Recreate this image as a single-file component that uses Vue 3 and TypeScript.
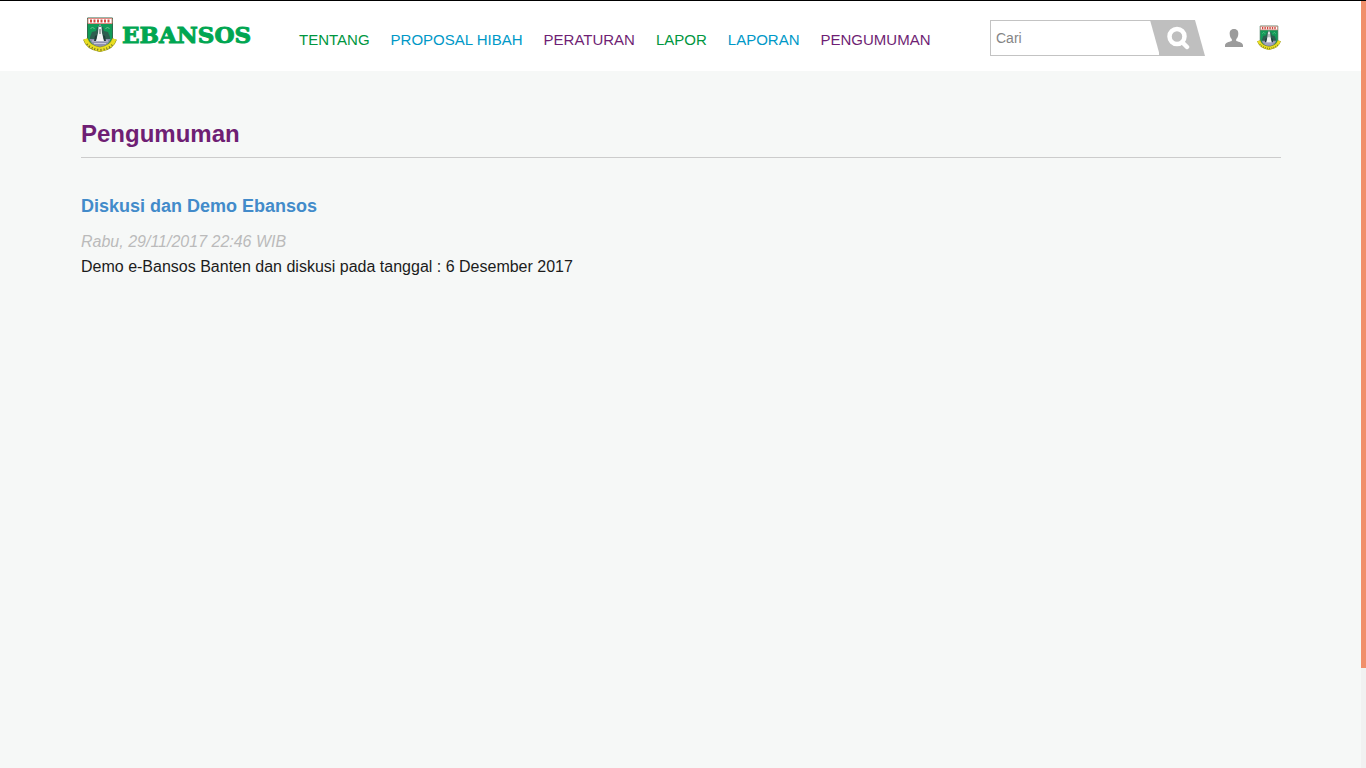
<script setup lang="ts">
import { ref } from 'vue'

interface MenuItem {
  label: string
  tone: 'green' | 'blue' | 'purple'
}

const menu: MenuItem[] = [
  { label: 'TENTANG', tone: 'green' },
  { label: 'PROPOSAL HIBAH', tone: 'blue' },
  { label: 'PERATURAN', tone: 'purple' },
  { label: 'LAPOR', tone: 'green' },
  { label: 'LAPORAN', tone: 'blue' },
  { label: 'PENGUMUMAN', tone: 'purple' },
]

const announcements = [
  {
    title: 'Diskusi dan Demo Ebansos',
    date: 'Rabu, 29/11/2017 22:46 WIB',
    body: 'Demo e-Bansos Banten dan diskusi pada tanggal : 6 Desember 2017',
  },
]

const query = ref('')
</script>

<template>
  <svg class="defs" aria-hidden="true">
    <symbol id="crest" viewBox="0 0 34 36">
      <path d="M4.500 1H29.500V21C29.500 27 24 30 17 32C10 30 4.500 27 4.500 21Z" fill="#119b58" stroke="#2f6b4c" stroke-width="1" />
      <path d="M5 1.500H29V6.500H5Z" fill="#fff" stroke="#e08a84" stroke-width="1" />
      <path d="M8 2.500V5.500M11.500 2.500V5.500M15 2.500V5.500M18.500 2.500V5.500M22 2.500V5.500M25.500 2.500V5.500" stroke="#d5483f" stroke-width="2" />
      <path d="M7 20L9 15L13 14L14 10L20 10L21 14L25 15L27 20V23H7Z" fill="#2c5f50" />
      <path d="M6.500 22H27.500C26 27 22 29 17 31C12 29 8 27 6.500 22Z" fill="#8e90ae" />
      <path d="M9 24H25M11 26.500H23" stroke="#c9cbdc" stroke-width="1" />
      <path d="M17 7L18.500 10L19 16L21 24H13L15 16L15.500 10Z" fill="#f3f5f5" />
      <path d="M17 7L18 10H16ZM16.500 12H17.500V17H16.500Z" fill="#4a5b5b" />
      <path d="M12 19L14 18L13 24H11ZM22 19L20 18L21 24H23Z" fill="#203a38" />
      <path d="M7.500 12L9.500 10L11.500 12M22.500 12L24.500 10L26.500 12" fill="none" stroke="#6fc492" stroke-width="1" />
      <path d="M2.500 22Q5 30.500 17 32.500Q29 30.500 31.500 22" fill="none" stroke="#8d8a23" stroke-width="5" />
      <path d="M2.500 22Q5 30.500 17 32.500Q29 30.500 31.500 22" fill="none" stroke="#e9df21" stroke-width="4" />
      <path d="M4 27Q8 32 17 33Q26 32 30 27" fill="none" stroke="#6b6a25" stroke-width="2" stroke-dasharray="1 2" />
    </symbol>
  </svg>
  <header class="topbar">
    <div class="container bar">
      <a class="brand" href="#">
        <svg class="brand-crest" aria-hidden="true"><use href="#crest" /></svg>
        <span>EBANSOS</span>
      </a>
      <nav class="menu">
        <a v-for="item in menu" :key="item.label" href="#" :class="item.tone">{{ item.label }}</a>
      </nav>
      <form class="search" @submit.prevent>
        <input v-model="query" type="text" placeholder="Cari" aria-label="Cari" />
        <button type="submit" aria-label="Cari">
          <svg viewBox="0 0 24 24" width="24" height="24" aria-hidden="true">
            <circle cx="11" cy="10.500" r="7.500" fill="none" stroke="#fff" stroke-width="4.500" />
            <path d="M16.500 16.500L21 21" stroke="#fff" stroke-width="4.500" stroke-linecap="round" />
          </svg>
        </button>
      </form>
      <a class="user" href="#" aria-label="Akun">
        <svg viewBox="0 0 18 18" width="18" height="18" aria-hidden="true">
          <path d="M9 0C5.500 0 4.500 2.500 4.700 5C4.900 7.500 5.500 9 6.800 10V12C4 13 0 13.500 0 16.500V18H18V16.500C18 13.500 14 13 11.200 12V10C12.500 9 13.100 7.500 13.300 5C13.500 2.500 12.500 0 9 0Z" fill="#9b9b9b" />
        </svg>
      </a>
      <a class="region" href="#" aria-label="Banten">
        <svg class="small-crest" aria-hidden="true"><use href="#crest" /></svg>
      </a>
    </div>
  </header>
  <main class="content">
    <div class="container">
      <h1>Pengumuman</h1>
      <article v-for="post in announcements" :key="post.title">
        <h2><a href="#">{{ post.title }}</a></h2>
        <time>{{ post.date }}</time>
        <p>{{ post.body }}</p>
      </article>
    </div>
  </main>
  <div class="scroll-track" aria-hidden="true"><div class="scroll-thumb"></div></div>
</template>

<style>
body {
  background: #f6f8f7;
  font-family: "Liberation Sans", Arial, sans-serif;
}
</style>

<style scoped>
* {
  box-sizing: border-box;
}
a {
  text-decoration: none;
}
.defs {
  position: absolute;
  width: 0;
  height: 0;
}
.container {
  max-width: 1200px;
  margin: 0 auto;
}
.topbar {
  background: #fff;
  border-top: 1px solid #000;
  padding-right: 4px;
}
.bar {
  display: flex;
  align-items: center;
  height: 70px;
  padding-top: 4px;
}
.brand {
  display: flex;
  align-items: center;
  gap: 5px;
  width: 218px;
  padding: 0 0 6px 2px;
  color: #00a651;
  font: bold 23px/36px "DejaVu Serif", serif;
  -webkit-text-stroke: 1px #00a651;
}
.brand-crest {
  width: 34px;
  height: 36px;
}
.menu {
  display: flex;
  gap: 21px;
  padding-top: 4px;
  font-size: 15px;
  line-height: 20px;
  white-space: nowrap;
}
.green {
  color: #009640;
}
.blue {
  color: #0098c7;
}
.purple {
  color: #6f1f74;
}
.search {
  display: flex;
  width: 215px;
  height: 36px;
  margin-left: auto;
}
.search input {
  flex: 1;
  min-width: 0;
  height: 36px;
  margin-right: -10px;
  padding: 0 5px;
  border: 1px solid #c3c3c3;
  border-radius: 0;
  background: #fff;
  outline: 0;
  color: #555;
  font: 14px "Liberation Sans", Arial, sans-serif;
}
.search input::placeholder {
  color: #858585;
  opacity: 1;
}
.search button {
  display: flex;
  align-items: center;
  justify-content: center;
  width: 55px;
  height: 36px;
  padding: 0;
  border: 0;
  background: #bfbfbf;
  clip-path: polygon(0 0, 45px 0, 100% 100%, 10px 100%);
  cursor: pointer;
}
.user {
  display: flex;
  margin-left: 20px;
}
.region {
  display: flex;
  margin-left: 14px;
}
.small-crest {
  width: 24px;
  height: 26px;
}
.content {
  padding: 48px 4px 0 0;
}
h1 {
  margin: 0 0 36px;
  padding-bottom: 8px;
  border-bottom: 1px solid #ccc;
  color: #6f1f74;
  font-size: 24px;
  line-height: 30px;
}
h2 {
  margin: 0 0 12px;
  font-size: 18px;
  line-height: 24px;
}
h2 a {
  color: #428bca;
}
time {
  display: block;
  color: #bbb;
  font-size: 16px;
  font-style: italic;
  line-height: 24px;
}
p {
  margin: 0;
  color: #1c1c1c;
  font-size: 16px;
  line-height: 26px;
}
.scroll-track {
  position: fixed;
  top: 1px;
  right: 0;
  bottom: 0;
  width: 5px;
  background: #f1f1f1;
}
.scroll-thumb {
  height: 87%;
  background: #f08f6b;
}
</style>
